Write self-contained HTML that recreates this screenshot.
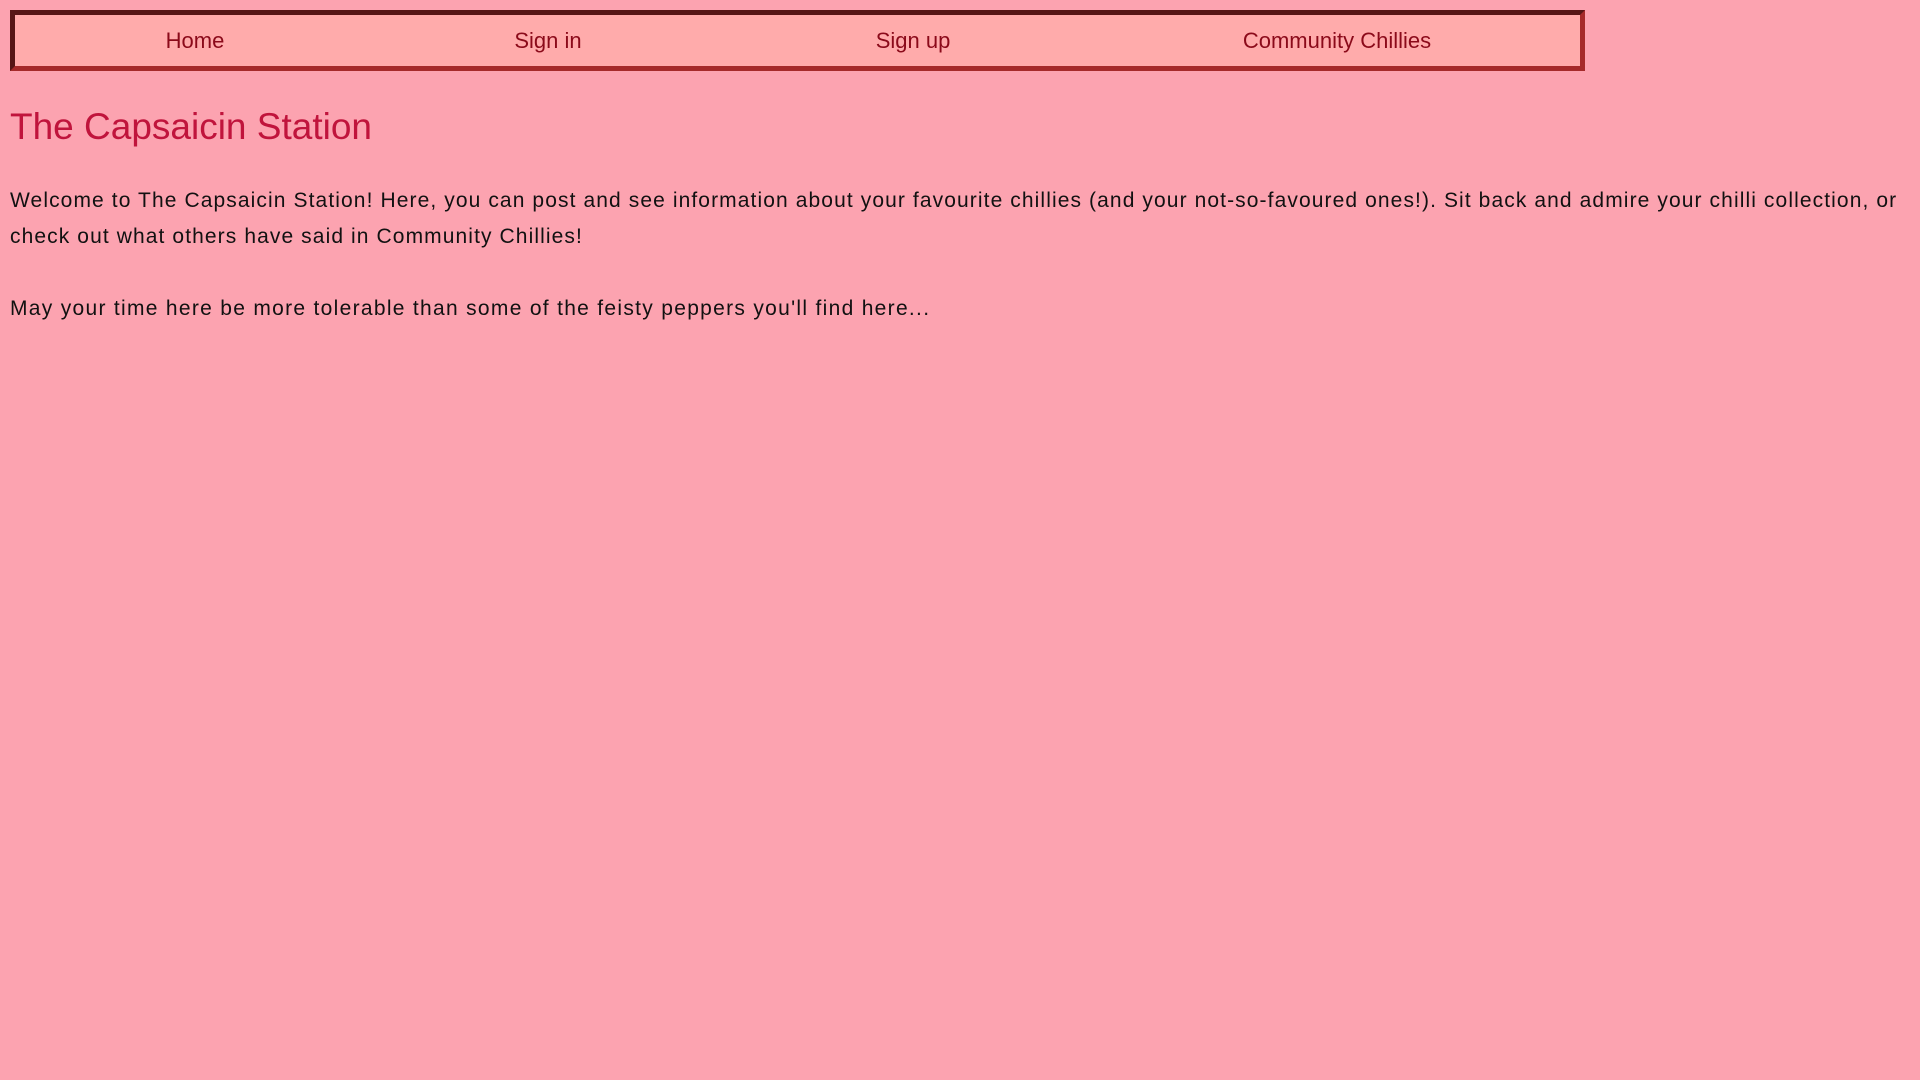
<!DOCTYPE html>
<html><head><meta charset="utf-8"><style>
html,body{margin:0;padding:0;}
body{width:1920px;height:1080px;background:#fca3b0;font-family:"Liberation Sans",sans-serif;position:relative;overflow:hidden;}
.nav{position:absolute;left:10px;top:10px;width:1565px;height:51px;background:#ffabab;border:5px solid;border-color:#561616 #a52a2a #a52a2a #561616;}
.nav span{position:absolute;top:13px;color:#8b0a1a;font-size:22px;transform:translateX(-50%);white-space:nowrap;}
h1{position:absolute;left:10px;top:106px;margin:0;font-size:37px;font-weight:normal;color:#c0143c;white-space:nowrap;}
p{position:absolute;left:10px;margin:0;font-size:21px;line-height:36px;color:#111;white-space:nowrap;letter-spacing:1.3px;}
</style></head><body>
<div class="nav">
<span style="left:180px">Home</span>
<span style="left:533px">Sign in</span>
<span style="left:898px">Sign up</span>
<span style="left:1322px">Community Chillies</span>
</div>
<h1>The Capsaicin Station</h1>
<p style="top:183px;letter-spacing:1.1px">Welcome to The Capsaicin Station! Here, you can post and see information about your favourite chillies (and your not-so-favoured ones!). Sit back and admire your chilli collection, or<br>check out what others have said in Community Chillies!</p>
<p style="top:291px">May your time here be more tolerable than some of the feisty peppers you'll find here...</p>
</body></html>
